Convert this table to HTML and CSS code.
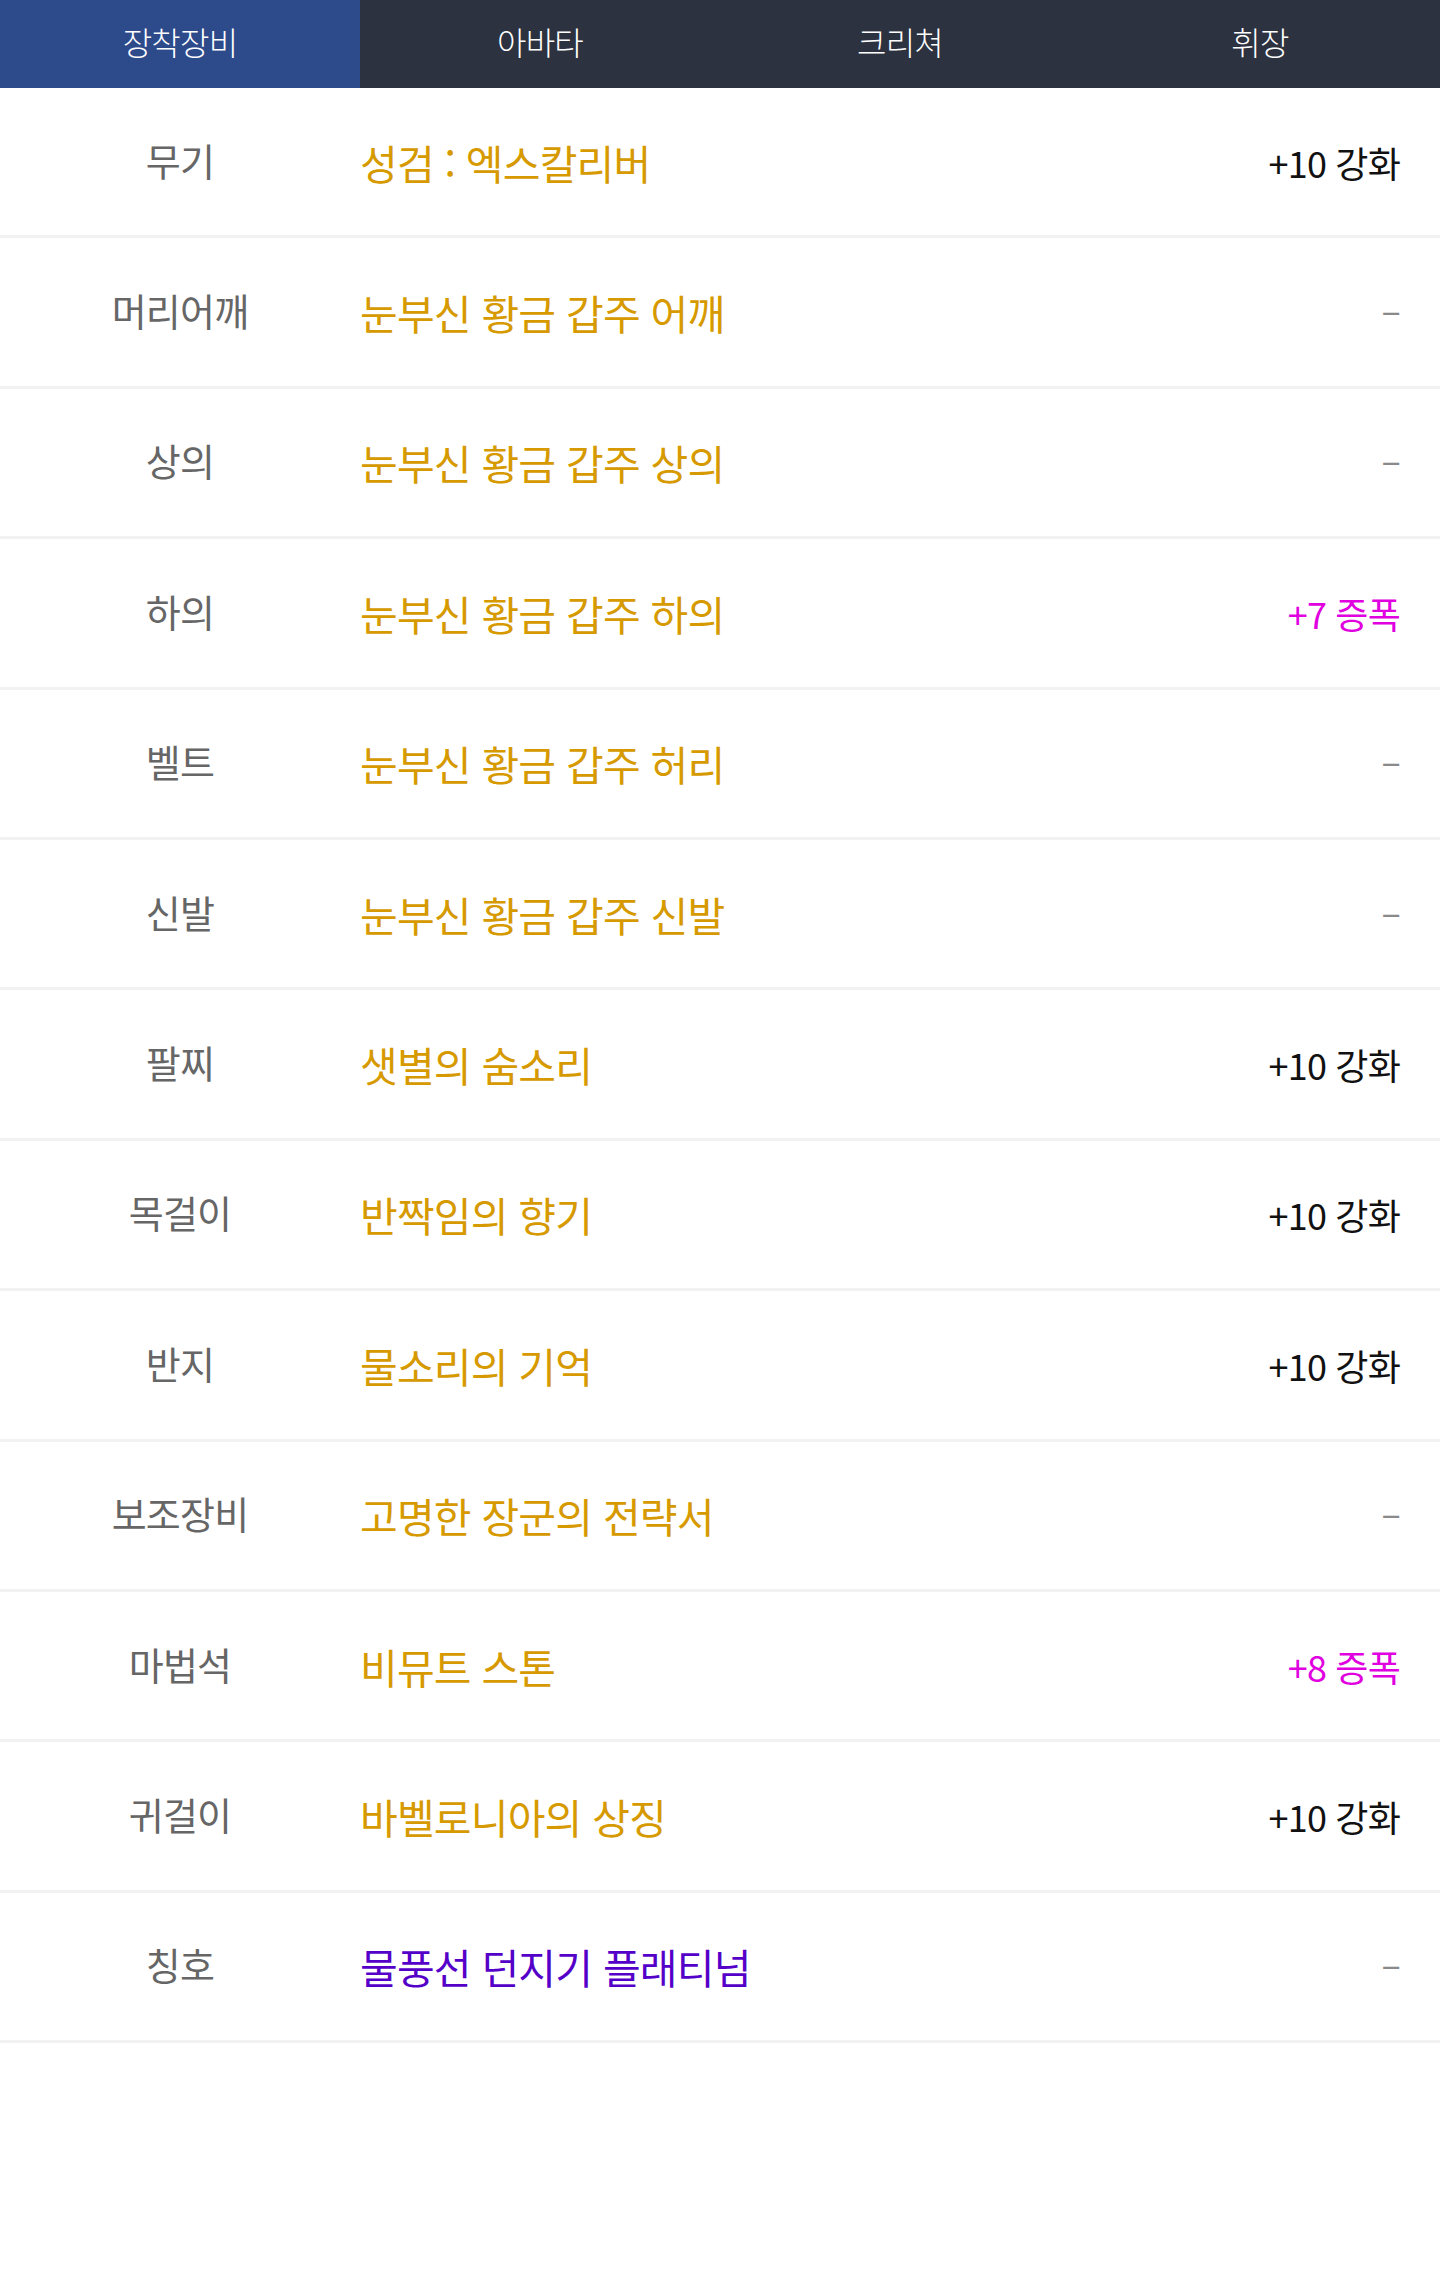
FILE: index.html
```html
<!DOCTYPE html>
<html lang="ko">
<head>
  <meta charset="UTF-8">
  <title>장착장비</title>
  <link rel="stylesheet" href="styles.css">
</head>
<body>
  <!-- 상단 탭 -->
  <nav class="tabs">
    <a class="tab active" href="#">장착장비</a>
    <a class="tab" href="#">아바타</a>
    <a class="tab" href="#">크리쳐</a>
    <a class="tab" href="#">휘장</a>
  </nav>

  <!-- 장비 목록 -->
  <ul class="equip-list">
    <li class="equip-row">
      <span class="slot">무기</span>
      <span class="item">성검 : 엑스칼리버</span>
      <span class="grade">+10 강화</span>
    </li>
    <li class="equip-row">
      <span class="slot">머리어깨</span>
      <span class="item">눈부신 황금 갑주 어깨</span>
      <span class="grade none">–</span>
    </li>
    <li class="equip-row">
      <span class="slot">상의</span>
      <span class="item">눈부신 황금 갑주 상의</span>
      <span class="grade none">–</span>
    </li>
    <li class="equip-row">
      <span class="slot">하의</span>
      <span class="item">눈부신 황금 갑주 하의</span>
      <span class="grade amp">+7 증폭</span>
    </li>
    <li class="equip-row">
      <span class="slot">벨트</span>
      <span class="item">눈부신 황금 갑주 허리</span>
      <span class="grade none">–</span>
    </li>
    <li class="equip-row">
      <span class="slot">신발</span>
      <span class="item">눈부신 황금 갑주 신발</span>
      <span class="grade none">–</span>
    </li>
    <li class="equip-row">
      <span class="slot">팔찌</span>
      <span class="item">샛별의 숨소리</span>
      <span class="grade">+10 강화</span>
    </li>
    <li class="equip-row">
      <span class="slot">목걸이</span>
      <span class="item">반짝임의 향기</span>
      <span class="grade">+10 강화</span>
    </li>
    <li class="equip-row">
      <span class="slot">반지</span>
      <span class="item">물소리의 기억</span>
      <span class="grade">+10 강화</span>
    </li>
    <li class="equip-row">
      <span class="slot">보조장비</span>
      <span class="item">고명한 장군의 전략서</span>
      <span class="grade none">–</span>
    </li>
    <li class="equip-row">
      <span class="slot">마법석</span>
      <span class="item">비뮤트 스톤</span>
      <span class="grade amp">+8 증폭</span>
    </li>
    <li class="equip-row">
      <span class="slot">귀걸이</span>
      <span class="item">바벨로니아의 상징</span>
      <span class="grade">+10 강화</span>
    </li>
    <li class="equip-row">
      <span class="slot">칭호</span>
      <span class="item rare">물풍선 던지기 플래티넘</span>
      <span class="grade none">–</span>
    </li>
  </ul>
</body>
</html>
```

FILE: styles.css
```css
body {
  margin: 0;
  background-color: #ffffff;
  font-family: "Noto Sans CJK KR", "Noto Sans", sans-serif;
  letter-spacing: -0.05em;
}

/* 탭 메뉴 */
.tabs {
  display: grid;
  grid-template-columns: repeat(4, 1fr);
  height: 88px;
  background-color: #2c323f;
}

.tab {
  display: flex;
  justify-content: center;
  align-items: center;
  padding-bottom: 6px;
  color: #ffffff;
  font-size: 32px;
  font-weight: 300;
  text-decoration: none;
}

.tab.active {
  background-color: #2d4a8b;
}

/* 장비 목록 */
.equip-list {
  list-style: none;
  margin: 0;
  padding: 0;
}

.equip-row {
  display: grid;
  grid-template-columns: 360px 1fr auto;
  align-items: center;
  height: 147.4px;
  border-bottom: 3px solid #f2f2f2;
}

.slot {
  padding-bottom: 5px;
  text-align: center;
  font-size: 38px;
  color: #666666;
}

.item {
  font-size: 41px;
  color: #d69a00;
}

.item.rare {
  color: #5500c8;
}

.grade {
  padding-right: 40px;
  font-size: 36px;
  color: #111111;
}

.grade.amp {
  color: #e000e0;
}

.grade.none {
  padding-bottom: 8px;
  color: #8a8a8a;
}
```
